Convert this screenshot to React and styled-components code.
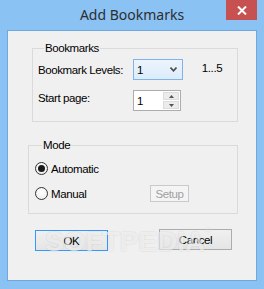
import React from "react";
import styled, { createGlobalStyle } from "styled-components";

const GlobalStyle = createGlobalStyle`
  html, body { margin: 0; padding: 0; }
  body { width: 264px; height: 289px; overflow: hidden; background: #8bc2f4; }
`;

const Window = styled.div`
  width: 264px;
  height: 289px;
  background: #8bc2f4;
  display: flex;
  flex-direction: column;
  box-sizing: border-box;
  font-family: "Liberation Sans", Arial, sans-serif;
  font-size: 11.5px;
  letter-spacing: -0.4px;
  color: #000;
`;

const TitleBar = styled.div`
  height: 30px;
  display: grid;
  grid-template-columns: 1fr auto 1fr;
  flex: none;
`;

const Title = styled.div`
  grid-column: 2;
  align-self: center;
  font-family: "Noto Sans", "Open Sans", sans-serif;
  font-size: 14px;
  letter-spacing: 0;
  color: #2e2e2e;
  line-height: 16px;
  margin-top: -1px;
`;

const CloseButton = styled.div`
  grid-column: 3;
  justify-self: end;
  align-self: start;
  width: 31px;
  height: 20px;
  margin-right: 7px;
  background: #c75050;
  display: flex;
  align-items: center;
  justify-content: center;
`;

const Client = styled.div`
  flex: 1;
  margin: 0 7px 8px 7px;
  border: 1px solid #6fa8de;
  background: #f0f0f0;
  display: flex;
  flex-direction: column;
  padding-top: 10px;
`;

const Group = styled.fieldset`
  margin: ${(p) => p.$top || 0}px 18px 0 ${(p) => p.$left}px;
  border: 1px solid #dadada;
  padding: ${(p) => p.$pad};
  min-width: 0;
`;

const Legend = styled.legend`
  padding: 0 1px;
  margin-left: ${(p) => p.$offset}px;
  line-height: 14px;
`;

const FormGrid = styled.div`
  display: grid;
  grid-template-columns: ${(p) => p.$cols};
  row-gap: ${(p) => p.$gap}px;
  align-items: center;
`;

const Label = styled.span`
  line-height: 14px;
  align-self: ${(p) => (p.$top ? "start" : "center")};
  margin-top: ${(p) => (p.$top ? 1 : 0)}px;
`;

const Select = styled.div`
  width: 50px;
  height: 21px;
  box-sizing: border-box;
  border: 1px solid #7eb4ea;
  background: linear-gradient(#ecf4fc, #dcecfc);
  display: flex;
  align-items: center;
  justify-content: space-between;
  padding: 0 5px 0 3px;
`;

const Hint = styled.span`
  margin-left: 9px;
  align-self: start;
  margin-top: 3px;
`;

const Spin = styled.div`
  width: 48px;
  height: 21px;
  box-sizing: border-box;
  border: 1px solid #acacac;
  background: #fff;
  display: flex;
  align-items: stretch;
`;

const SpinValue = styled.span`
  flex: 1;
  padding-left: 3px;
  display: flex;
  align-items: center;
`;

const SpinButtons = styled.div`
  width: 16px;
  display: flex;
  flex-direction: column;
  gap: 1px;
  padding: 1px 1px 1px 0;
`;

const SpinButton = styled.div`
  flex: 1;
  background: #ececec;
  border: 1px solid #dcdcdc;
  display: flex;
  align-items: center;
  justify-content: center;
`;

const RadioRow = styled.div`
  display: flex;
  align-items: center;
  height: 17px;
  gap: 3px;
`;

const RadioCircle = styled.span`
  width: 13px;
  height: 13px;
  box-sizing: border-box;
  border-radius: 50%;
  border: 1px solid #333;
  background: radial-gradient(circle at 50% 40%, #ffffff, #eaeaea);
  display: flex;
  align-items: center;
  justify-content: center;
  &::after {
    content: "";
    width: 7px;
    height: 7px;
    border-radius: 50%;
    background: #1a1a1a;
    display: ${(p) => (p.$checked ? "block" : "none")};
  }
`;

const SmallButton = styled.div`
  width: 39px;
  height: 17px;
  box-sizing: border-box;
  border: 1px solid #cacaca;
  background: #f4f4f4;
  color: #a0a0a0;
  display: flex;
  align-items: center;
  justify-content: center;
`;

const ButtonRow = styled.div`
  position: relative;
  display: flex;
  gap: 51px;
  margin-top: 16px;
  padding-left: 27px;
`;

const Button = styled.div`
  width: 73px;
  height: 21px;
  box-sizing: border-box;
  border: 1px solid ${(p) => (p.$focused ? "#3399ff" : "#acacac")};
  background: linear-gradient(#f0f0f0, #e5e5e5);
  display: flex;
  align-items: center;
  justify-content: center;
  margin-top: ${(p) => (p.$focused ? 0 : -1)}px;
`;

const Watermark = styled.div`
  position: absolute;
  left: 37px;
  top: -4px;
  font-family: "Liberation Sans", Arial, sans-serif;
  font-weight: bold;
  font-size: 28px;
  letter-spacing: 0;
  color: rgba(255, 255, 255, 0.6);
  text-shadow: 0 0 2px rgba(0, 0, 0, 0.14);
  pointer-events: none;
  & sup {
    font-size: 8px;
    vertical-align: top;
    font-weight: normal;
  }
`;

export default function App() {
  return (
    <>
      <GlobalStyle />
      <Window>
        <TitleBar>
          <Title>Add Bookmarks</Title>
          <CloseButton>
            <svg width="10" height="9" viewBox="0 0 10 9">
              <path d="M1 0.5 L9 8.5 M9 0.5 L1 8.5" stroke="#fff" strokeWidth="2" />
            </svg>
          </CloseButton>
        </TitleBar>
        <Client>
          <Group $left={24} $pad="4px 5px 10px 5px">
            <Legend $offset={6}>Bookmarks</Legend>
            <FormGrid $cols="95px auto auto" $gap={10}>
              <Label>Bookmark Levels:</Label>
              <Select>
                <span>1</span>
                <svg width="7" height="5" viewBox="0 0 7 5">
                  <path d="M0.5 0.5 L3.5 3.8 L6.5 0.5" stroke="#4a4a4a" strokeWidth="1.6" fill="none" />
                </svg>
              </Select>
              <Hint>1...5</Hint>
              <Label $top>Start page:</Label>
              <Spin>
                <SpinValue>1</SpinValue>
                <SpinButtons>
                  <SpinButton>
                    <svg width="5" height="3" viewBox="0 0 5 3">
                      <path d="M0 3 L2.5 0 L5 3 Z" fill="#555" />
                    </svg>
                  </SpinButton>
                  <SpinButton>
                    <svg width="5" height="3" viewBox="0 0 5 3">
                      <path d="M0 0 L2.5 3 L5 0 Z" fill="#555" />
                    </svg>
                  </SpinButton>
                </SpinButtons>
              </Spin>
              <span />
            </FormGrid>
          </Group>
          <Group $left={20} $top={16} $pad="8px 6px 11px 6px">
            <Legend $offset={7}>Mode</Legend>
            <FormGrid $cols="115px auto" $gap={8}>
              <RadioRow>
                <RadioCircle $checked />
                <span>Automatic</span>
              </RadioRow>
              <span />
              <RadioRow>
                <RadioCircle />
                <span>Manual</span>
              </RadioRow>
              <SmallButton>Setup</SmallButton>
            </FormGrid>
          </Group>
          <ButtonRow>
            <Button $focused>OK</Button>
            <Button>Cancel</Button>
            <Watermark>
              SOFTPEDIA<sup>®</sup>
            </Watermark>
          </ButtonRow>
        </Client>
      </Window>
    </>
  );
}
